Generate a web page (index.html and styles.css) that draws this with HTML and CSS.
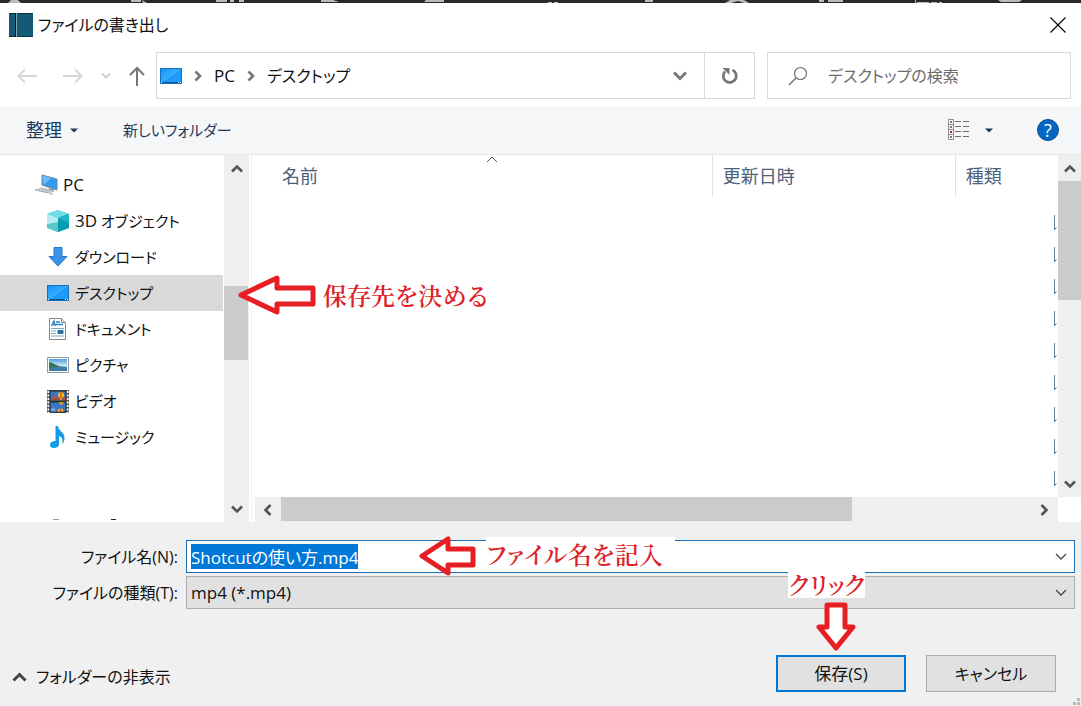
FILE: index.html
```html
<!DOCTYPE html>
<html lang="ja">
<head>
<meta charset="utf-8">
<title>ファイルの書き出し</title>
<link rel="stylesheet" href="styles.css">
</head>
<body>
<svg class="defs" aria-hidden="true">
  <defs>
    <linearGradient id="screen" x1="0" y1="0" x2="1" y2="1">
      <stop offset="0" stop-color="#1493f5"/><stop offset=".5" stop-color="#35acff"/><stop offset=".52" stop-color="#1a9bff"/><stop offset="1" stop-color="#1e9dff"/>
    </linearGradient>
    <linearGradient id="sky" x1="0" y1="0" x2="0" y2="1">
      <stop offset="0" stop-color="#4f9be0"/><stop offset=".6" stop-color="#d8eefb"/><stop offset="1" stop-color="#5e93b8"/>
    </linearGradient>
    <symbol id="desktop" viewBox="0 0 22 16">
      <rect x=".5" y=".5" width="21" height="15" fill="url(#screen)" stroke="#1672b8"/>
      <path d="M1 14.500h20" stroke="#0b4f8a"/><path d="M1 14.500h1M18 14.500h1M20 14.500h1" stroke="#fff"/>
    </symbol>
    <symbol id="sb-up" viewBox="0 0 12 9"><path d="M1 7.500 6 2.500l5 5" fill="none" stroke="#555" stroke-width="2.600"/></symbol>
    <symbol id="sb-down" viewBox="0 0 12 9"><path d="M1 1.500l5 5 5-5" fill="none" stroke="#555" stroke-width="2.600"/></symbol>
    <symbol id="sb-left" viewBox="0 0 9 12"><path d="M7.500 1l-5 5 5 5" fill="none" stroke="#555" stroke-width="2.600"/></symbol>
    <symbol id="sb-right" viewBox="0 0 9 12"><path d="M1.500 1l5 5-5 5" fill="none" stroke="#555" stroke-width="2.600"/></symbol>
    <symbol id="crumb" viewBox="0 0 8 12"><path d="M1.500 1.500 6 6l-4.500 4.500" fill="none" stroke="#777" stroke-width="2.600"/></symbol>
    <symbol id="thin-down" viewBox="0 0 12 8"><path d="M1 1l5 5 5-5" fill="none" stroke="#444" stroke-width="1.300"/></symbol>
    <symbol id="tri" viewBox="0 0 8 5"><path d="M0 .5h8L4 4.500z" fill="#1e395b"/></symbol>
    <symbol id="arrow-left" viewBox="0 0 78 40"><path d="M3 20 39 3v10h36v16H39v8z" fill="#fff" stroke="#e81e25" stroke-width="5" stroke-linejoin="round"/></symbol>
    <symbol id="arrow-short" viewBox="0 0 58 40"><path d="M3 20 29 3v10h25v16H29v8z" fill="#fff" stroke="#e81e25" stroke-width="5" stroke-linejoin="round"/></symbol>
    <symbol id="arrow-down" viewBox="0 0 40 50"><path d="M11 3h18v22h8L20 46 3 25h8z" fill="#fff" stroke="#e81e25" stroke-width="5" stroke-linejoin="round"/></symbol>
  </defs>
</svg>
<div class="dialog">
  <div class="backdrop">
    <svg width="1081" height="3" aria-hidden="true"><path d="M8 3l3-3h7l3 3zM131 0h10v2h-10zM142 0l5 3h-4zM216 0h11v2h-11zM230 0h4v2h-4zM239 0h5v2h-5zM321 0h12l6 2h-18zM426 0h18v2h-20zM548 2h4v1h-4zM554 2h4v1h-4zM645 0h8v2h-8zM725 3l5-3h14l5 3h-5l-6-2-7 2zM819 0h5v2h-5zM828 0h15v2h-15zM915 0h1v3h-1zM917 2h12v1h-12zM931 2h6v1h-6zM939 2h3v1h-3zM998 0h24l-3 2h-18z" fill="#bbb"/></svg>
  </div>

  <header class="titlebar">
    <svg width="24" height="24" viewBox="0 0 24 24" aria-hidden="true"><path d="M0 0h24v24H0z" fill="#125a75"/><path d="M0 .5h24M0 23.500h24" stroke="#0a3343"/><path d="M6.500 0v24" stroke="#111"/><path d="M7.500 0v24" stroke="#8aa6ae"/></svg>
    <h1 class="title">ファイルの書き出し</h1>
    <button class="close" aria-label="閉じる"><svg width="16" height="16" viewBox="0 0 16 16"><path d="M.5.5l15 15M15.500.5l-15 15" stroke="#000" stroke-width="1.100"/></svg></button>
  </header>

  <nav class="navbar">
    <div class="history">
      <button class="icon-btn" aria-label="戻る"><svg width="20" height="16" viewBox="0 0 20 16"><path d="M20 8H2M8 1.500 1.500 8 8 14.500" fill="none" stroke="#d6d6d6" stroke-width="2"/></svg></button>
      <button class="icon-btn" aria-label="進む"><svg width="20" height="16" viewBox="0 0 20 16"><path d="M0 8h18M12 1.500 18.500 8 12 14.500" fill="none" stroke="#d6d6d6" stroke-width="2"/></svg></button>
      <button class="icon-btn" aria-label="最近の場所"><svg width="10" height="8" viewBox="0 0 10 8"><path d="M1 1.500 5 5.500l4-4" fill="none" stroke="#d0d0d0" stroke-width="2"/></svg></button>
      <button class="icon-btn" aria-label="上へ"><svg width="16" height="20" viewBox="0 0 16 20"><path d="M8 20V2M1 9l7-7 7 7" fill="none" stroke="#757575" stroke-width="2"/></svg></button>
    </div>
    <div class="address">
      <svg width="22" height="16"><use href="#desktop"/></svg>
      <svg width="8" height="12"><use href="#crumb"/></svg>
      <a href="#" class="crumb">PC</a>
      <svg width="8" height="12"><use href="#crumb"/></svg>
      <a href="#" class="crumb kana">デスクトップ</a>
      <button class="icon-btn history-drop" aria-label="以前の場所"><svg width="14" height="10" viewBox="0 0 14 10"><path d="M1 1.500l6 6 6-6" fill="none" stroke="#777" stroke-width="2.800"/></svg></button>
      <button class="refresh" aria-label="更新"><svg width="18" height="18" viewBox="0 0 18 18"><path d="M11.500 3A6.500 6.500 0 1 1 4 4.500" fill="none" stroke="#777" stroke-width="2.800"/><path d="M1.500 1h7v7z" fill="#777"/></svg></button>
    </div>
    <label class="search">
      <svg width="20" height="20" viewBox="0 0 20 20" aria-hidden="true"><circle cx="12.500" cy="7.500" r="6" fill="none" stroke="#707070" stroke-width="1.200"/><path d="M8 12l-7 7" stroke="#707070" stroke-width="1.500"/></svg>
      <input class="search-input kana" type="search" placeholder="デスクトップの検索" aria-label="デスクトップの検索">
    </label>
  </nav>

  <div class="toolbar">
    <button class="tool organize">整理 <svg width="8" height="5"><use href="#tri"/></svg></button>
    <button class="tool new-folder">新しいフォルダー</button>
    <button class="tool view" aria-label="表示方法">
      <svg width="22" height="22" viewBox="0 0 22 22"><path d="M.5.5h5v20h-5zM.5 5.500h5M.5 10.500h5M.5 15.500h5" fill="#fff" stroke="#8c8c8c"/><path d="M2 3h2M2 8h2M2 18h2" stroke="#777" stroke-width="2"/><path d="M2 13h2" stroke="#a22" stroke-width="2"/><path d="M7 2.500h6M15 2.500h6M7 7.500h6M15 7.500h6M7 12.500h6M15 12.500h6M7 17.500h6M15 17.500h6" stroke="#707070"/></svg>
      <svg width="8" height="5"><use href="#tri"/></svg>
    </button>
    <button class="help" aria-label="ヘルプ">?</button>
  </div>

  <main class="main">
    <aside class="sidebar">
      <ul class="tree">
        <li class="node root"><svg width="24" height="22" viewBox="0 0 24 22"><path d="M7 1l15 4v11L7 11z" fill="#2e9bf0" stroke="#6f8796"/><path d="M7.500 1.500l9 2.500-8 7z" fill="#6bbdfa"/><path d="M14 14l5 1v2l-5-1z" fill="#8fa0aa"/><path d="M0 16l7-2 12 3-5 2z" fill="#d6dde2" stroke="#9ba8b0" stroke-width=".8"/><path d="M3 16.500l10 2M6 15.500l10 2" stroke="#a5b0b8" stroke-width=".8"/><path d="M14 20l3-1 2 1-3 1z" fill="#b8c2c8"/></svg>PC</li>
        <li class="node"><svg width="22" height="22" viewBox="0 0 22 22"><path d="M11 0l11 4v14l-11 4L0 18V4z" fill="#38c5d3"/><path d="M11 0l11 4-11 4L0 4z" fill="#6fdbe2"/><path d="M0 4l11 4v14L0 18z" fill="#b5edf0"/><path d="M0 14l11-2v10L0 18z" fill="#5bc5cc"/><path d="M11 8l11-4v14l-11 4z" fill="#0b9bb0"/><path d="M11 8l11-4v9z" fill="#1fb6ca"/></svg><span><span class="latin">3D</span> オブジェクト</span></li>
        <li class="node"><svg width="22" height="20" viewBox="0 0 22 20"><path d="M7 .5h8v9h5L11 19 2 9.500h5z" fill="#3d94e6" stroke="#2578c4"/></svg>ダウンロード</li>
        <li class="node selected"><svg width="22" height="16"><use href="#desktop"/></svg>デスクトップ</li>
        <li class="node"><svg width="22" height="22" viewBox="0 0 22 22"><path d="M2.500.5h12l4 4v17h-16z" fill="#fff" stroke="#888"/><path d="M14.500.5v4h4" fill="#ddd" stroke="#888"/><path d="M4.500 8l2.500-5 1.500 5M5 6.500h3M9 4h4M9 6.500h7" fill="none" stroke="#2b86c5" stroke-width="1.400"/><path d="M4 10.500h13M4 13h5M4 15.500h5M4 18h13" stroke="#7da7c8"/><path d="M10.500 12h6v4h-6z" fill="#26749f"/></svg>ドキュメント</li>
        <li class="node"><svg width="22" height="16" viewBox="0 0 22 16"><path d="M.5.5h21v15H.5z" fill="#fff" stroke="#8f9ba5"/><path d="M2 2h18v12H2z" fill="url(#sky)"/><path d="M2 5c5 1 7 4 13 4.500l-7 1.500-6 1z" fill="#357453"/><path d="M2 11c6-1 12-2 18-1v4H2z" fill="#3e7ca5"/></svg>ピクチャ</li>
        <li class="node"><svg width="22" height="23" viewBox="0 0 22 23"><path d="M0 0h22v23H0z" fill="#555"/><path d="M1.500 1v22M20.500 1v22" stroke="#fff" stroke-width="2" stroke-dasharray="2 1.500"/><path d="M3 1h16v10H3zM3 12h16v10H3z" fill="#3975c5" stroke="#222"/><path d="M4 8l4-2 4 2 6-1v3.500H4z" fill="#c4484a"/><path d="M5 10h12" stroke="#2c6b3a"/><circle cx="14" cy="5" r="3" fill="#f6bd20"/><path d="M14 2v6" stroke="#c1291f"/><path d="M13 8h2v2h-2zM12 12h5l-2 3h-2z" fill="#d79a1d"/><path d="M10.500 21.500a3 3 0 0 1 6 0z" fill="#f6bd20"/><path d="M13.500 19v2.500" stroke="#c1291f"/><path d="M4 19l3-2 2 4.500H4z" fill="#6da5dd"/></svg>ビデオ</li>
        <li class="node"><svg width="22" height="22" viewBox="0 0 22 22"><path d="M8.500 0H11c.5 5 6.500 6 6.500 12 0 3-1 5-2 6 .5-5-.5-7-3.500-8v8c0 3-3 4-5 4-3 0-4-2-4-3 0-2 2-4 5.500-4z" fill="#119be8"/></svg>ミュージック</li>
      </ul>
      <svg class="cut-row" width="124" height="3" aria-hidden="true"><path d="M53 .5h6" stroke="#999"/><path d="M111 .5h5" stroke="#222"/></svg>
    </aside>
    <div class="vbar side-bar">
      <svg width="12" height="9"><use href="#sb-up"/></svg>
      <div class="track"><div class="gap-side"></div><div class="thumb thumb-side"></div></div>
      <svg width="12" height="9"><use href="#sb-down"/></svg>
    </div>
    <section class="files">
      <div class="list">
        <div class="columns">
          <button class="col name">名前<svg class="sort" width="12" height="7" viewBox="0 0 12 7"><path d="M1 6l5-5 5 5" fill="none" stroke="#555"/></svg></button>
          <button class="col date">更新日時</button>
          <button class="col kind">種類</button>
        </div>
        <svg class="row-marks" width="3" height="272" viewBox="0 0 3 272" aria-hidden="true"><path d="M.5 0v15M.5 32v15M.5 64v15M.5 96v15M.5 128v15M.5 160v15M.5 192v15M.5 224v15M.5 256v15" stroke="#6683a5"/><path d="M.5 14.500l2-2M.5 46.500l2-2M.5 78.500l2-2M.5 110.500l2-2M.5 142.500l2-2M.5 174.500l2-2M.5 206.500l2-2M.5 238.500l2-2M.5 270.500l2-2" stroke="#405d80"/></svg>
      </div>
      <div class="vbar file-bar">
        <svg width="12" height="9"><use href="#sb-up"/></svg>
        <div class="track"><div class="thumb thumb-file"></div></div>
        <svg width="12" height="9"><use href="#sb-down"/></svg>
      </div>
      <div class="hbar">
        <svg width="9" height="12"><use href="#sb-left"/></svg>
        <div class="htrack"><div class="hthumb"></div></div>
        <svg width="9" height="12"><use href="#sb-right"/></svg>
      </div>
    </section>
    <div class="note note-place"><svg width="78" height="40"><use href="#arrow-left"/></svg><span>保存先を決める</span></div>
  </main>

  <form class="footer">
    <div class="fields">
      <label class="label kana" for="fname">ファイル名(N):</label>
      <div class="combo">
        <input class="field fname" id="fname" type="text" value="Shotcutの使い方.mp4">
        <svg class="chev" width="12" height="8"><use href="#thin-down"/></svg>
        <div class="note note-name"><svg width="58" height="40"><use href="#arrow-short"/></svg><span class="paper">ファイル名を記入</span></div>
      </div>
      <label class="label kana" for="ftype">ファイルの種類(T):</label>
      <div class="combo">
        <select class="field ftype" id="ftype"><option>mp4 (*.mp4)</option></select>
        <svg class="chev" width="12" height="8"><use href="#thin-down"/></svg>
      </div>
    </div>
    <div class="actions">
      <button type="button" class="hide-folders kana"><svg width="15" height="10" viewBox="0 0 15 10"><path d="M1.500 8.500l6-6 6 6" fill="none" stroke="#444" stroke-width="3"/></svg>フォルダーの非表示</button>
      <div class="save-wrap">
        <button type="button" class="btn primary">保存(S)</button>
        <div class="note note-click"><span class="paper">クリック</span><svg width="40" height="50"><use href="#arrow-down"/></svg></div>
      </div>
      <button type="button" class="btn kana">キャンセル</button>
    </div>
    <svg class="grip" width="8" height="8" viewBox="0 0 8 8" aria-hidden="true"><path d="M4 0h3v3H4zM4 4h3v3H4zM0 4h3v3H0z" fill="#bbb"/></svg>
  </form>
</div>
<script src="main.js"></script>
</body>
</html>
```
FILE: styles.css
```css
* { box-sizing: border-box; }
body {
  margin: 0;
  font-family: "Open Sans", "Noto Sans CJK JP", sans-serif;
  font-size: 17px;
  line-height: 24px;
  font-feature-settings: "palt";
  color: #111;
}
button, input, select { font: inherit; font-feature-settings: inherit; color: inherit; margin: 0; }
button { background: none; border: 0; padding: 0; }
svg { display: block; flex: none; }
.defs { position: absolute; width: 0; height: 0; }
.kana { font-size: 16px; }

.dialog { display: flex; flex-direction: column; min-height: 100vh; background: #fff; }
.backdrop { height: 3px; background: #2b2829; overflow: hidden; }

.titlebar { display: flex; align-items: center; gap: 5px; height: 43px; padding: 0 15px 0 9px; }
.title { margin: 0; font-size: 16px; font-weight: 400; }
.close { margin-left: auto; }

.navbar { display: flex; align-items: stretch; height: 60px; padding: 6px 10px 7px 17px; }
.history { display: flex; align-items: center; gap: 18px; width: 139px; }
.history .icon-btn:nth-child(1) { margin-right: 8px; }
.address { flex: 549 1 0; display: flex; align-items: center; gap: 12px; border: 1px solid #d9d9d9; padding-left: 3px; }
.crumb { color: #111; text-decoration: none; }
.history-drop { margin-left: auto; margin-right: 5px; }
.refresh { align-self: stretch; width: 50px; border-left: 1px solid #d9d9d9; display: flex; align-items: center; justify-content: center; }
.search { width: 304px; margin-left: 12px; border: 1px solid #d9d9d9; display: flex; align-items: center; gap: 20px; padding: 0 20px; }
.search-input { flex: 1; min-width: 0; border: 0; outline: 0; padding: 0; background: none; }
.search-input::placeholder { color: #6d6d6d; opacity: 1; }

.toolbar { display: flex; align-items: center; height: 49px; padding: 0 22px 0 26px; background: #f4f6f8; border-bottom: 1px solid #e3e6ea; color: #1e395b; }
.tool { display: flex; align-items: center; gap: 8px; }
.organize { font-size: 18px; }
.new-folder { margin-left: 45px; font-size: 15px; }
.view { margin-left: auto; gap: 15px; }
.help { width: 22px; height: 22px; margin-left: 44px; border-radius: 50%; background: #0566c4; border: 1px solid #0a4a8f; color: #fff; font-size: 18px; font-weight: 400; line-height: 20px; text-align: center; }

.main { position: relative; flex: 1; display: flex; min-height: 367px; }
.sidebar { width: 224px; padding-right: 1px; display: flex; flex-direction: column; justify-content: space-between; }
.tree { list-style: none; margin: 0; padding: 12px 0 0; }
.node { display: flex; align-items: center; gap: 6px; height: 36px; padding-left: 47px; font-size: 15px; }
.root { padding-left: 35px; gap: 4px; }
.root, .latin { font-size: 17px; }
.selected { background: #d9d9d9; }
.vbar { display: flex; flex-direction: column; align-items: center; justify-content: space-between; background: #efefef; }
.vbar > svg { margin: 9px 0 8px; }
.side-bar { width: 25px; }
.track { flex: 1; align-self: stretch; }
.gap-side { height: 105px; }
.thumb { background: #cbcbcb; }
.thumb-side { height: 74px; margin-right: 1px; }
.thumb-file { height: 119px; }
.files { flex: 1; display: grid; grid-template-columns: 1fr 23px; grid-template-rows: 1fr 25px; margin-left: 2px; border-left: 1px solid #f3f3f3; padding-left: 3px; }
.list { display: flex; flex-direction: column; }
.columns { display: flex; height: 42px; color: #4c607a; font-size: 18px; }
.col { position: relative; text-align: left; padding-left: 10px; border-right: 1px solid #e3e3e3; }
.name { width: 57%; padding-left: 27px; }
.date { width: 30%; flex: 0 1 243px; }
.kind { flex: 1; border-right: 0; }
.sort { position: absolute; left: 50%; top: 1px; margin-left: 3px; }
.row-marks { align-self: flex-end; margin: 18px 1px 0 0; }
.hbar { display: flex; align-items: center; background: #efefef; }
.hbar > svg { margin: 0 9px 0 8px; }
.htrack { flex: 1; align-self: stretch; }
.hthumb { width: 76%; height: 24px; background: #cbcbcb; }

.footer { position: relative; background: #f0f0f0; padding: 18px 6px 14px 0; }
.fields { display: grid; grid-template-columns: 186px 1fr; row-gap: 3px; }
.label { justify-self: end; align-self: center; padding-right: 8px; }
.combo { position: relative; }
.field { display: block; width: 100%; height: 33px; border-radius: 0; outline: 0; appearance: none; padding: 0 30px 0 4px; }
.fname { background: #fff; border: 1px solid #1c6eb4; }
.fname::selection { background: #0078d7; color: #fff; }
.ftype { background: #e1e1e1; border: 1px solid #adadad; }
.chev { position: absolute; right: 8px; top: 13px; pointer-events: none; }

.actions { display: flex; align-items: center; gap: 20px; margin-top: 46px; padding: 0 19px 0 12px; }
.hide-folders { display: flex; align-items: center; gap: 9px; margin-right: auto; padding-top: 6px; }
.save-wrap { position: relative; }
.btn { display: block; width: 130px; height: 37px; background: #e1e1e1; border: 1px solid #adadad; }
.primary { border: 2px solid #0078d7; }
.grip { position: absolute; right: 0; bottom: 0; }

.note { position: absolute; display: flex; align-items: center; color: #dd1f2a; font-family: "Noto Serif CJK JP", "Noto Sans CJK JP", serif; font-size: 24px; font-weight: 600; line-height: 28px; white-space: nowrap; pointer-events: none; }
.paper { background: #fff; }
.note-place { left: 238px; top: 120px; gap: 7px; }
.note-name { left: 233px; top: -4px; gap: 9px; }
.note-name .paper { padding-right: 12px; line-height: 34px; margin-bottom: 4px; }
.note-click { flex-direction: column; align-items: flex-end; gap: 4px; right: 41px; bottom: 40px; }
.note-click svg { margin-right: 9px; }
```
FILE: main.js
```js
const nameField = document.getElementById("fname");
nameField.focus();
nameField.select();
```
